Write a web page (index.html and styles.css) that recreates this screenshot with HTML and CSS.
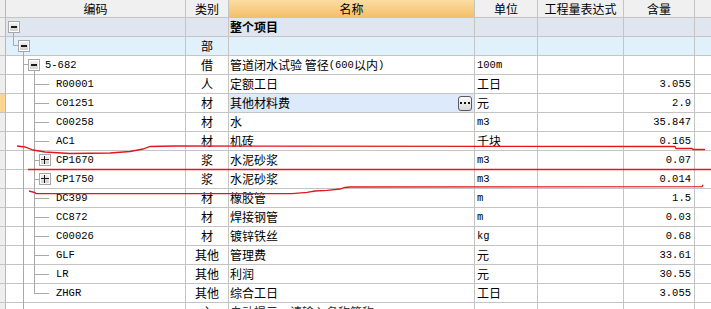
FILE: index.html
```html
<!DOCTYPE html>
<html lang="zh-CN">
<head>
    <meta charset="UTF-8">
    <meta name="viewport" content="width=device-width, initial-scale=1.0">
    <title>定额子目</title>
    <link rel="stylesheet" href="styles.css">
</head>
<body>
    <div class="sheet">
        <div class="row head">
            <div class="c gut"></div>
            <div class="c mid">编码</div>
            <div class="c mid">类别</div>
            <div class="c mid active">名称</div>
            <div class="c mid">单位</div>
            <div class="c mid">工程量表达式</div>
            <div class="c mid">含量</div>
            <div class="c last"></div>
        </div>

        <div class="row top">
            <div class="c gut"></div>
            <div class="c code lv0"><span class="tog minus"></span></div>
            <div class="c mid"></div>
            <div class="c name"><b>整个项目</b></div>
            <div class="c"></div>
            <div class="c"></div>
            <div class="c"></div>
            <div class="c last"></div>
        </div>

        <div class="row sub">
            <div class="c gut"></div>
            <div class="c code lv1"><span class="tog minus"></span></div>
            <div class="c mid">部</div>
            <div class="c name"></div>
            <div class="c"></div>
            <div class="c"></div>
            <div class="c"></div>
            <div class="c last"></div>
        </div>

        <div class="row">
            <div class="c gut"></div>
            <div class="c code lv2"><span class="tog minus"></span><span class="en">5-682</span></div>
            <div class="c mid">借</div>
            <div class="c name">管道闭水试验 管径<span class="en">(600</span>以内<span class="en">)</span></div>
            <div class="c unit"><span class="en">100m</span></div>
            <div class="c"></div>
            <div class="c num"></div>
            <div class="c last"></div>
        </div>

        <div class="row">
            <div class="c gut"></div>
            <div class="c code lv3"><span class="en">R00001</span></div>
            <div class="c mid">人</div>
            <div class="c name">定额工日</div>
            <div class="c unit">工日</div>
            <div class="c"></div>
            <div class="c num"><span class="en">3.055</span></div>
            <div class="c last"></div>
        </div>

        <div class="row">
            <div class="c gut current"></div>
            <div class="c code lv3"><span class="en">C01251</span></div>
            <div class="c mid">材</div>
            <div class="c name editing">其他材料费<span class="more"><i></i><i></i><i></i></span></div>
            <div class="c unit">元</div>
            <div class="c"></div>
            <div class="c num"><span class="en">2.9</span></div>
            <div class="c last"></div>
        </div>

        <div class="row">
            <div class="c gut"></div>
            <div class="c code lv3"><span class="en">C00258</span></div>
            <div class="c mid">材</div>
            <div class="c name">水</div>
            <div class="c unit"><span class="en">m3</span></div>
            <div class="c"></div>
            <div class="c num"><span class="en">35.847</span></div>
            <div class="c last"></div>
        </div>

        <div class="row">
            <div class="c gut"></div>
            <div class="c code lv3"><span class="en">AC1</span></div>
            <div class="c mid">材</div>
            <div class="c name">机砖</div>
            <div class="c unit">千块</div>
            <div class="c"></div>
            <div class="c num"><span class="en">0.165</span></div>
            <div class="c last"></div>
        </div>

        <div class="row">
            <div class="c gut"></div>
            <div class="c code lv3b"><span class="tog plus"></span><span class="en">CP1670</span></div>
            <div class="c mid">浆</div>
            <div class="c name">水泥砂浆</div>
            <div class="c unit"><span class="en">m3</span></div>
            <div class="c"></div>
            <div class="c num"><span class="en">0.07</span></div>
            <div class="c last"></div>
        </div>

        <div class="row">
            <div class="c gut"></div>
            <div class="c code lv3b"><span class="tog plus"></span><span class="en">CP1750</span></div>
            <div class="c mid">浆</div>
            <div class="c name">水泥砂浆</div>
            <div class="c unit"><span class="en">m3</span></div>
            <div class="c"></div>
            <div class="c num"><span class="en">0.014</span></div>
            <div class="c last"></div>
        </div>

        <div class="row">
            <div class="c gut"></div>
            <div class="c code lv3"><span class="en">DC399</span></div>
            <div class="c mid">材</div>
            <div class="c name">橡胶管</div>
            <div class="c unit"><span class="en">m</span></div>
            <div class="c"></div>
            <div class="c num"><span class="en">1.5</span></div>
            <div class="c last"></div>
        </div>

        <div class="row">
            <div class="c gut"></div>
            <div class="c code lv3"><span class="en">CC872</span></div>
            <div class="c mid">材</div>
            <div class="c name">焊接钢管</div>
            <div class="c unit"><span class="en">m</span></div>
            <div class="c"></div>
            <div class="c num"><span class="en">0.03</span></div>
            <div class="c last"></div>
        </div>

        <div class="row">
            <div class="c gut"></div>
            <div class="c code lv3"><span class="en">C00026</span></div>
            <div class="c mid">材</div>
            <div class="c name">镀锌铁丝</div>
            <div class="c unit"><span class="en">kg</span></div>
            <div class="c"></div>
            <div class="c num"><span class="en">0.68</span></div>
            <div class="c last"></div>
        </div>

        <div class="row">
            <div class="c gut"></div>
            <div class="c code lv3"><span class="en">GLF</span></div>
            <div class="c mid">其他</div>
            <div class="c name">管理费</div>
            <div class="c unit">元</div>
            <div class="c"></div>
            <div class="c num"><span class="en">33.61</span></div>
            <div class="c last"></div>
        </div>

        <div class="row">
            <div class="c gut"></div>
            <div class="c code lv3"><span class="en">LR</span></div>
            <div class="c mid">其他</div>
            <div class="c name">利润</div>
            <div class="c unit">元</div>
            <div class="c"></div>
            <div class="c num"><span class="en">30.55</span></div>
            <div class="c last"></div>
        </div>

        <div class="row">
            <div class="c gut"></div>
            <div class="c code lv3"><span class="en">ZHGR</span></div>
            <div class="c mid">其他</div>
            <div class="c name">综合工日</div>
            <div class="c unit">工日</div>
            <div class="c"></div>
            <div class="c num"><span class="en">3.055</span></div>
            <div class="c last"></div>
        </div>

        <div class="row">
            <div class="c gut"></div>
            <div class="c code"></div>
            <div class="c mid">主</div>
            <div class="c name hint">自动提示：请输入名称简称</div>
            <div class="c unit"></div>
            <div class="c"></div>
            <div class="c num"></div>
            <div class="c last"></div>
        </div>

        <!-- tree connectors + red pen marks drawn over the grid -->
        <svg class="overlay" width="711" height="330" viewBox="0 0 711 330">
            <g class="tree">
                <path d="M13.5 33 V45.5 H18"/>
                <path d="M23.5 52 V330 M24 64.5 H28"/>
                <path d="M34.5 71 V293.5"/>
                <path d="M34 84.5 H49 M34 103.5 H49 M34 122.5 H49 M34 141.5 H49"/>
                <path d="M34 160.5 H39 M34 179.5 H39"/>
                <path d="M34 198.5 H49 M34 217.5 H49 M34 236.5 H49 M34 255.5 H49 M34 274.5 H49 M34 293.5 H49"/>
            </g>
            <g class="pen">
                <path d="M17 146 L25 147 L33 150 L45 152 L70 153.5 L110 153 L130 151.5 L143 149 L150 146.5 L175 146 L675 146.5 L676 148.5 L692 148.5 L693 149.5 L705 149.5"/>
                <path d="M28 169.5 L711 169.5"/>
                <path d="M29 191 L35 192.7 L36 193.7 L292 193.7 L307 192.3 L315 191 L327 190.3 L340 189 L345 187.5 L350 187 L702 186.7 L703 184.7"/>
            </g>
        </svg>
    </div>
</body>
</html>
```

FILE: styles.css
```css
body {
    margin: 0;
    background-color: #ffffff;
    font-family: "Noto Sans CJK SC", "Liberation Sans", sans-serif;
    font-size: 12px;
    color: #000000;
    overflow: hidden;
}

.sheet {
    position: relative;
    width: 711px;
}

.row {
    display: grid;
    grid-template-columns: 6px 180px 43px 246px 63px 86px 71px 1fr;
    height: 19px;
}

.c {
    box-sizing: border-box;
    display: flex;
    align-items: center;
    border-right: 1px solid #c4c4c4;
    border-bottom: 1px solid #c4c4c4;
    white-space: nowrap;
    overflow: hidden;
    line-height: 18px;
}

.c.last {
    border-right: none;
}

.head {
    height: 18px;
    background-color: #f0f0f0;
}

.head .active {
    background: linear-gradient(#fbdda2, #f4c06a);
}

.top {
    background-color: #dfe6ef;
}

.sub {
    background-color: #e1f1fc;
}

.gut {
    background-color: #eeeeee;
    border-right-color: #b8b8b8;
}

.gut.current {
    background-color: #fdd592;
}

.mid {
    justify-content: center;
}

.name {
    padding-left: 1px;
}

.name.editing {
    background-color: #dceafb;
}

.name.hint {
    color: #333333;
}

.unit {
    padding-left: 2px;
}

.num {
    justify-content: flex-end;
    padding-right: 3px;
}

.en {
    font-family: "Liberation Mono", "DejaVu Sans Mono", monospace;
    font-size: 10.5px;
}

/* tree levels inside the code column */
.code {
    gap: 5px;
}

.lv0 { padding-left: 2px; }
.lv1 { padding-left: 12px; }
.lv2 { padding-left: 22px; }
.lv3 { padding-left: 50px; }
.lv3b { padding-left: 33px; }

.tog {
    position: relative;
    flex: none;
    box-sizing: border-box;
    width: 12px;
    height: 12px;
    border: 1px solid #a6a6a6;
    box-shadow: inset 0 0 0 1px #ffffff;
    background: linear-gradient(#f6f6f6, #cdcdcd);
}

.tog::before,
.tog::after {
    content: "";
    position: absolute;
    background-color: #1a1a1a;
}

.tog.minus::before {
    left: 2px;
    top: 4px;
    width: 6px;
    height: 2px;
}

.tog.plus::before {
    left: 1px;
    top: 4px;
    width: 8px;
    height: 1px;
}

.tog.plus::after {
    left: 4px;
    top: 1px;
    width: 1px;
    height: 8px;
}

/* the "..." edit button */
.more {
    display: flex;
    align-items: center;
    justify-content: center;
    gap: 2px;
    margin-left: auto;
    margin-right: 2px;
    box-sizing: border-box;
    width: 14px;
    height: 15px;
    border: 1px solid #5a5a5a;
    border-radius: 3px;
    background: linear-gradient(#fafafa, #d9d9d9);
}

.more i {
    width: 2px;
    height: 2px;
    background-color: #111111;
}

.overlay {
    position: absolute;
    top: 0;
    left: 0;
    pointer-events: none;
}

.tree path {
    fill: none;
    stroke: #a9a9a9;
    stroke-width: 1;
}

.pen path {
    fill: none;
    stroke: #e3161d;
    stroke-width: 1.3;
}
```
